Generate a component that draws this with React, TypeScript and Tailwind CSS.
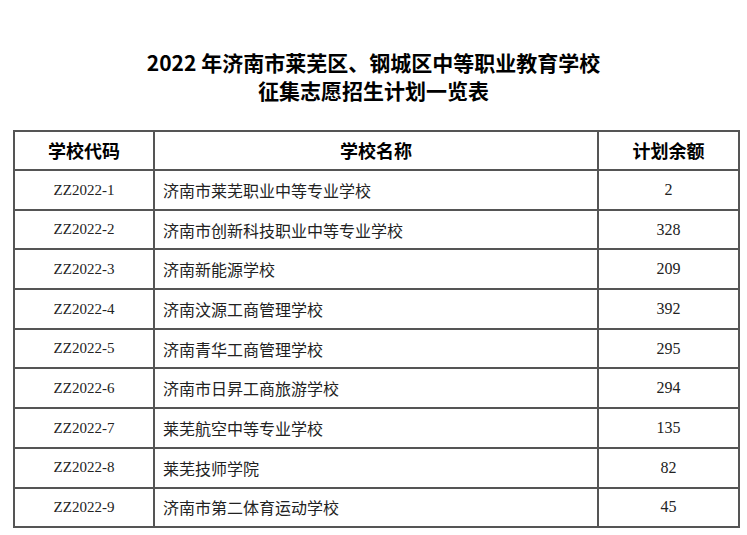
const rows = [
  { code: "ZZ2022-1", name: "济南市莱芜职业中等专业学校", quota: "2" },
  { code: "ZZ2022-2", name: "济南市创新科技职业中等专业学校", quota: "328" },
  { code: "ZZ2022-3", name: "济南新能源学校", quota: "209" },
  { code: "ZZ2022-4", name: "济南汶源工商管理学校", quota: "392" },
  { code: "ZZ2022-5", name: "济南青华工商管理学校", quota: "295" },
  { code: "ZZ2022-6", name: "济南市日昇工商旅游学校", quota: "294" },
  { code: "ZZ2022-7", name: "莱芜航空中等专业学校", quota: "135" },
  { code: "ZZ2022-8", name: "莱芜技师学院", quota: "82" },
  { code: "ZZ2022-9", name: "济南市第二体育运动学校", quota: "45" },
];

const sans = "font-['Noto_Sans_CJK_SC',sans-serif]";
const serif = "font-['Liberation_Serif','Noto_Sans_CJK_SC',serif]";

export default function App() {
  return (
    <div className="w-[747px] h-[535px] bg-white overflow-hidden">
      <div className={`pt-[48px] text-center text-black font-bold text-[21px] ${sans}`}>
        <p className="leading-[28px]">2022 年济南市莱芜区、钢城区中等职业教育学校</p>
        <p className="leading-[28px]">征集志愿招生计划一览表</p>
      </div>

      <table className="ml-[13px] mt-[26px] w-[725px] border-collapse border-2 border-[#555] table-fixed">
        <colgroup>
          <col className="w-[140px]" />
          <col className="w-[444px]" />
          <col className="w-[141px]" />
        </colgroup>
        <thead>
          <tr className={`h-[39px] text-[18px] font-bold text-black ${sans}`}>
            <th className="border-2 border-[#555] text-center">学校代码</th>
            <th className="border-2 border-[#555] text-center">学校名称</th>
            <th className="border-2 border-[#555] text-center">计划余额</th>
          </tr>
        </thead>
        <tbody>
          {rows.map((r) => (
            <tr key={r.code} className="h-[39.7px] text-[#222]">
              <td className={`border-2 border-[#555] text-center text-[15px] ${serif}`}>{r.code}</td>
              <td className={`border-2 border-[#555] pl-[8px] text-[16px] ${sans}`}>{r.name}</td>
              <td className={`border-2 border-[#555] text-center text-[16px] ${serif}`}>{r.quota}</td>
            </tr>
          ))}
        </tbody>
      </table>
    </div>
  );
}
